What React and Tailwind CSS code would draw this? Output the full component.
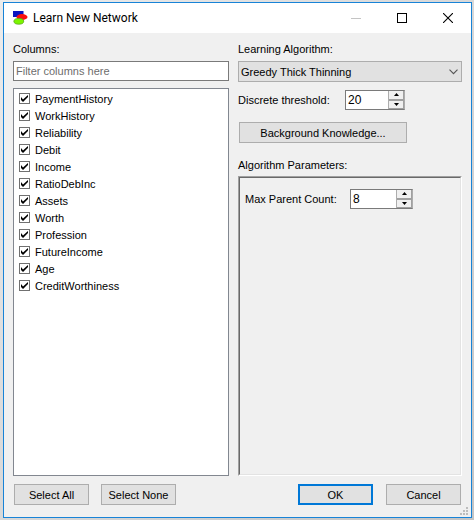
import { useState } from "react";
import clsx from "clsx";

const COLUMNS = [
  "PaymentHistory",
  "WorkHistory",
  "Reliability",
  "Debit",
  "Income",
  "RatioDebInc",
  "Assets",
  "Worth",
  "Profession",
  "FutureIncome",
  "Age",
  "CreditWorthiness",
];

const AppIcon = () => (
  <svg width="15" height="14" viewBox="0 0 15 14" aria-hidden="true">
    <rect x="0" y="0" width="10.5" height="6" fill="#0a14c0" />
    <ellipse cx="9" cy="6" rx="5.5" ry="3" fill="#fb1010" />
    <ellipse cx="5.8" cy="10.3" rx="4.9" ry="2.9" fill="#7cf500" stroke="#5aa81c" strokeWidth="0.8" />
  </svg>
);

const TitleBar = ({ title }) => (
  <header className="flex h-[30px] items-center bg-white pl-[9px] text-black">
    <AppIcon />
    <h1 className="ml-[5px] flex-1 font-[Roboto,sans-serif] text-[12px] leading-4">{title}</h1>
    <button type="button" aria-label="Minimize" className="flex h-full w-[46px] items-center justify-center">
      <svg width="10" height="10" viewBox="0 0 10 10">
        <path d="M0 5.5h10" stroke="#c4c4c4" />
      </svg>
    </button>
    <button type="button" aria-label="Maximize" className="flex h-full w-[46px] items-center justify-center">
      <svg width="10" height="10" viewBox="0 0 10 10">
        <rect x="0.5" y="0.5" width="9" height="9" fill="none" stroke="#000" />
      </svg>
    </button>
    <button type="button" aria-label="Close" className="flex h-full w-[46px] items-center justify-center">
      <svg width="10" height="10" viewBox="0 0 10 10">
        <path d="M0 0l10 10M10 0L0 10" stroke="#000" strokeWidth="1.1" />
      </svg>
    </button>
  </header>
);

const Button = ({ children, primary = false, className = "", onClick }) => (
  <button
    type="button"
    onClick={onClick}
    className={clsx(
      "flex h-[21px] items-center justify-center bg-[#e1e1e1]",
      primary ? "border-2 border-[#0078d7]" : "border border-[#adadad]",
      className
    )}
  >
    {children}
  </button>
);

const CheckItem = ({ label, checked, onChange }) => (
  <li>
    <label className="flex h-[17px] items-center gap-[5px]">
      <span className="grid size-[11px]">
        <input
          type="checkbox"
          checked={checked}
          onChange={onChange}
          className="peer col-start-1 row-start-1 size-[11px] appearance-none border border-[#707070] bg-white"
        />
        <svg
          viewBox="0 0 11 11"
          className="pointer-events-none invisible col-start-1 row-start-1 size-[11px] peer-checked:visible"
        >
          <path d="M2 4v3l2 2 5-5V2L4 6.5z" fill="#000" />
        </svg>
      </span>
      {label}
    </label>
  </li>
);

const Spinner = ({ id, value, onChange, className = "" }) => (
  <div className={clsx("flex h-5 border border-[#7a7a7a] border-r-[#adadad] bg-white", className)}>
    <input
      id={id}
      type="text"
      inputMode="numeric"
      value={value}
      onChange={(e) => onChange(Number(e.target.value) || 0)}
      className="min-w-0 flex-1 pl-[2px] text-[12px] outline-none"
    />
    <div className="flex w-4 flex-col border-l border-[#adadad] bg-[#f0f0f0]">
      <button
        type="button"
        aria-label="Increase"
        onClick={() => onChange(value + 1)}
        className="flex flex-1 items-center justify-center border-r border-b border-[#a0a0a0]"
      >
        <svg width="5" height="3" viewBox="0 0 5 3">
          <path d="M0 3L2.5 0L5 3z" fill="#000" />
        </svg>
      </button>
      <button
        type="button"
        aria-label="Decrease"
        onClick={() => onChange(value - 1)}
        className="flex flex-1 items-center justify-center border-t border-r border-b border-[#a0a0a0]"
      >
        <svg width="5" height="3" viewBox="0 0 5 3">
          <path d="M0 0L2.5 3L5 0z" fill="#000" />
        </svg>
      </button>
    </div>
  </div>
);

const SizeGrip = () => (
  <svg width="8" height="8" viewBox="0 0 8 8" className="absolute right-[3px] bottom-[2px]" aria-hidden="true">
    <path
      d="M6 0h2v2h-2zM3 3h2v2h-2zM6 3h2v2h-2zM0 6h2v2h-2zM3 6h2v2h-2zM6 6h2v2h-2z"
      fill="#bdbdbd"
    />
  </svg>
);

const App = () => {
  const [filter, setFilter] = useState("");
  const [selected, setSelected] = useState(COLUMNS);
  const [algorithm, setAlgorithm] = useState("Greedy Thick Thinning");
  const [threshold, setThreshold] = useState(20);
  const [maxParents, setMaxParents] = useState(8);

  const visible = COLUMNS.filter((name) => name.toLowerCase().includes(filter.toLowerCase()));

  const toggle = (name) =>
    setSelected((prev) => (prev.includes(name) ? prev.filter((n) => n !== name) : [...prev, name]));

  return (
    <div className="flex min-h-screen flex-col bg-linear-to-br from-[#ececec] to-[#c4c4c4] pt-[2px] pr-[2px] pb-[2px] pl-[3px] font-['Liberation_Sans',Arial,sans-serif] text-[11px] leading-4 text-black">
      <div className="relative flex flex-1 flex-col border border-[#1883d7] bg-[#f0f0f0]">
        <TitleBar title="Learn New Network" />

        <main className="grid flex-1 grid-cols-[27fr_28fr] gap-x-[9px] px-[9px] pt-2">
          <section className="flex flex-col">
            <label htmlFor="filter">Columns:</label>
            <input
              id="filter"
              type="text"
              placeholder="Filter columns here"
              value={filter}
              onChange={(e) => setFilter(e.target.value)}
              className="mt-1 h-5 border border-[#7a7a7a] bg-white px-[2px] outline-none placeholder:text-[#6d6d6d]"
            />
            <ul className="mt-[7px] flex-1 border border-[#828790] bg-white px-[5px] pt-px">
              {visible.map((name) => (
                <CheckItem
                  key={name}
                  label={name}
                  checked={selected.includes(name)}
                  onChange={() => toggle(name)}
                />
              ))}
            </ul>
          </section>

          <section className="flex flex-col">
            <label htmlFor="algorithm">Learning Algorithm:</label>
            <div className="mt-1 grid items-center">
              <select
                id="algorithm"
                value={algorithm}
                onChange={(e) => setAlgorithm(e.target.value)}
                className="col-start-1 row-start-1 h-[21px] appearance-none border border-[#adadad] bg-[#e1e1e1] pl-[2px] outline-none"
              >
                <option>Greedy Thick Thinning</option>
              </select>
              <svg
                width="9"
                height="6"
                viewBox="0 0 9 6"
                className="pointer-events-none col-start-1 row-start-1 mr-1 justify-self-end"
              >
                <path d="M0.5 0.7L4.5 4.7L8.5 0.7" fill="none" stroke="#555" strokeWidth="1.1" />
              </svg>
            </div>

            <div className="mt-2 flex items-center">
              <label htmlFor="threshold" className="w-[107px]">
                Discrete threshold:
              </label>
              <Spinner id="threshold" value={threshold} onChange={setThreshold} className="w-[60px]" />
            </div>

            <Button className="mt-3 ml-px w-[168px]">Background Knowledge...</Button>

            <h2 className="mt-[14px]">Algorithm Parameters:</h2>
            <div className="mt-[3px] flex-1 border border-t-[#a0a0a0] border-r-white border-b-white border-l-[#a0a0a0]">
              <div className="h-full border border-t-[#696969] border-r-[#e3e3e3] border-b-[#e3e3e3] border-l-[#696969] pt-[11px] pl-[5px]">
                <div className="flex items-center">
                  <label htmlFor="max-parents" className="w-[105px]">
                    Max Parent Count:
                  </label>
                  <Spinner id="max-parents" value={maxParents} onChange={setMaxParents} className="w-[63px]" />
                </div>
              </div>
            </div>
          </section>
        </main>

        <footer className="flex justify-between px-[10px] pt-2 pb-3">
          <div className="flex gap-3">
            <Button className="w-[75px]" onClick={() => setSelected(COLUMNS)}>
              Select All
            </Button>
            <Button className="w-[75px]" onClick={() => setSelected([])}>
              Select None
            </Button>
          </div>
          <div className="flex gap-[13px]">
            <Button primary className="w-[75px]">
              OK
            </Button>
            <Button className="w-[75px]">Cancel</Button>
          </div>
        </footer>
        <SizeGrip />
      </div>
    </div>
  );
};

export default App;
